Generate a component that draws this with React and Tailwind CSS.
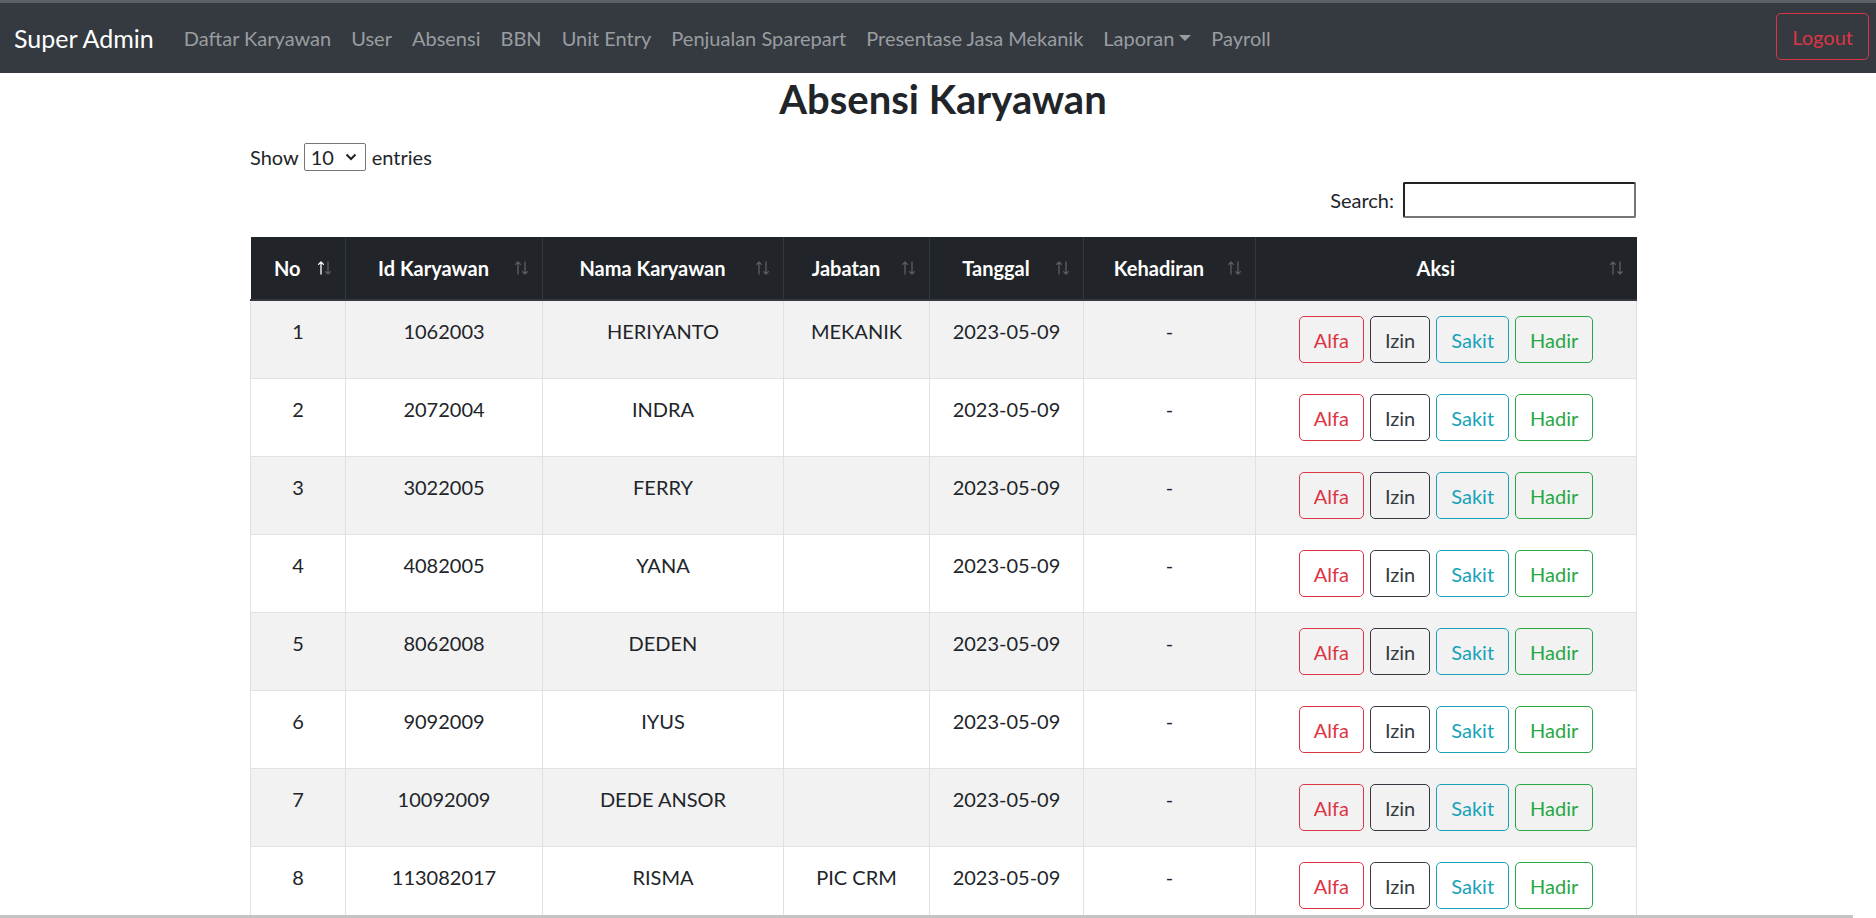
import { useState } from "react";

// Nav links in the top bar
const navLinks = ["Daftar Karyawan", "User", "Absensi", "BBN", "Unit Entry", "Penjualan Sparepart", "Presentase Jasa Mekanik"];

const rows = [
    { no: 1, id: "1062003", nama: "HERIYANTO", jabatan: "MEKANIK" },
    { no: 2, id: "2072004", nama: "INDRA", jabatan: "" },
    { no: 3, id: "3022005", nama: "FERRY", jabatan: "" },
    { no: 4, id: "4082005", nama: "YANA", jabatan: "" },
    { no: 5, id: "8062008", nama: "DEDEN", jabatan: "" },
    { no: 6, id: "9092009", nama: "IYUS", jabatan: "" },
    { no: 7, id: "10092009", nama: "DEDE ANSOR", jabatan: "" },
    { no: 8, id: "113082017", nama: "RISMA", jabatan: "PIC CRM" },
];

// Sorting arrows used by the datatable header
function SortIcon({ active }) {
    return (
        <svg width="15" height="16" viewBox="0 0 15 16" className="absolute right-[13px] top-[23px]">
            <g fill="none" strokeWidth="1.3" strokeLinecap="round" strokeLinejoin="round">
                <path d="M4 14V2M1.6 4.4L4 2l2.4 2.4" stroke={active ? "#ffffff" : "#5b5f63"} />
                <path d="M11 2v12M8.6 11.6L11 14l2.4-2.4" stroke="#5b5f63" />
            </g>
        </svg>
    )
}

function HeadCell({ label, active, last }) {
    return (
        <th className={"relative h-[63px] pl-[12px] pr-[33px] text-center align-middle text-[20px] font-bold text-white border-b-2 border-b-[#32383e] " + (last ? "" : "border-r border-r-[#32383e]")}>
            {label}
            <SortIcon active={active} />
        </th>
    )
}

function ActionButton({ label, color }) {
    return (
        <button className={"h-[47px] px-[14px] rounded-[5px] border text-[20px] leading-[30px] " + color}>
            {label}
        </button>
    )
}

export default function App() {
    const [search, setSearch] = useState("")

    return (
        <div className="relative h-[918px] overflow-hidden bg-white font-['Lato','Open_Sans',sans-serif] text-[#212529]">

            {/* Navbar */}
            <nav className="h-[73px] border-t-[3px] border-t-[#5c5f63] bg-[#343a40] flex items-center pl-[14px] pr-[7px]">
                <a className="text-[25px] text-white mr-[20px] leading-[36px]">Super Admin</a>
                {navLinks.map((l) => (
                    <a key={l} className="px-[10px] text-[20px] text-[#9a9da0] leading-[30px]">{l}</a>
                ))}
                <a className="px-[10px] text-[20px] text-[#9a9da0] leading-[30px] flex items-center">
                    Laporan
                    <span className="ml-[5px] w-0 h-0 border-l-[6px] border-r-[6px] border-t-[6px] border-l-transparent border-r-transparent border-t-[#9a9da0]" />
                </a>
                <a className="px-[10px] text-[20px] text-[#9a9da0] leading-[30px]">Payroll</a>
                <button className="ml-auto mt-[-3px] h-[47px] px-[15px] rounded-[5px] border border-[#dc3545] text-[#dc3545] text-[20px]">Logout</button>
            </nav>

            {/* Content */}
            <div className="ml-[250px] w-[1386px]">
                <h2 className="mt-[2px] text-center text-[40px] leading-[48px] font-bold">Absensi Karyawan</h2>

                <div className="mt-[19px] flex items-center h-[30px] text-[20px]">
                    <span>Show</span>
                    <div className="ml-[5px] mr-[6px] w-[62px] h-[28px] border border-[#767676] rounded-[2px] flex items-center justify-between pl-[6px] pr-[8px]">
                        <span className="text-[20px]">10</span>
                        <svg width="12" height="8" viewBox="0 0 12 8"><path d="M1.5 1.5L6 6l4.5-4.5" fill="none" stroke="#222" strokeWidth="2" /></svg>
                    </div>
                    <span>entries</span>
                </div>

                <div className="mt-[10px] flex justify-end items-center h-[36px] text-[20px]">
                    <label>Search:</label>
                    <input
                        value={search}
                        onChange={(e) => setSearch(e.target.value)}
                        className="ml-[9px] w-[233px] h-[36px] border-2 border-t-[#222] border-l-[#222] border-r-[#767676] border-b-[#767676] rounded-[2px] px-2 outline-none"
                    />
                </div>

                {/* Datatable */}
                <table className="mt-[19px] w-[1386px] table-fixed border-collapse">
                    <colgroup>
                        <col className="w-[95px]" />
                        <col className="w-[197px]" />
                        <col className="w-[241px]" />
                        <col className="w-[146px]" />
                        <col className="w-[154px]" />
                        <col className="w-[172px]" />
                        <col className="w-[381px]" />
                    </colgroup>
                    <thead className="bg-[#212529]">
                        <tr>
                            <HeadCell label="No" active />
                            <HeadCell label="Id Karyawan" />
                            <HeadCell label="Nama Karyawan" />
                            <HeadCell label="Jabatan" />
                            <HeadCell label="Tanggal" />
                            <HeadCell label="Kehadiran" />
                            <HeadCell label="Aksi" last />
                        </tr>
                    </thead>
                    <tbody className="text-[20px] leading-[30px]">
                        {rows.map((r) => (
                            <tr key={r.no} className={r.no % 2 === 1 ? "bg-[#f2f2f2]" : "bg-white"}>
                                <td className="border border-[#dee2e6] pt-[15px] pb-[15px] align-top text-center">{r.no}</td>
                                <td className="border border-[#dee2e6] pt-[15px] pb-[15px] align-top text-center">{r.id}</td>
                                <td className="border border-[#dee2e6] pt-[15px] pb-[15px] align-top text-center">{r.nama}</td>
                                <td className="border border-[#dee2e6] pt-[15px] pb-[15px] align-top text-center">{r.jabatan}</td>
                                <td className="border border-[#dee2e6] pt-[15px] pb-[15px] align-top text-center">2023-05-09</td>
                                <td className="border border-[#dee2e6] pt-[15px] pb-[15px] align-top text-center">-</td>
                                <td className="border border-[#dee2e6] pt-[15px] pb-[15px] align-top">
                                    <div className="flex justify-center gap-[6px]">
                                        <ActionButton label="Alfa" color="border-[#dc3545] text-[#dc3545]" />
                                        <ActionButton label="Izin" color="border-[#343a40] text-[#343a40]" />
                                        <ActionButton label="Sakit" color="border-[#17a2b8] text-[#17a2b8]" />
                                        <ActionButton label="Hadir" color="border-[#28a745] text-[#28a745]" />
                                    </div>
                                </td>
                            </tr>
                        ))}
                    </tbody>
                </table>
            </div>

            {/* horizontal scrollbar thumb */}
            <div className="absolute bottom-0 left-0 h-[3px] w-[1853px] bg-[#c4c4c4]" />
        </div>
    )
}
